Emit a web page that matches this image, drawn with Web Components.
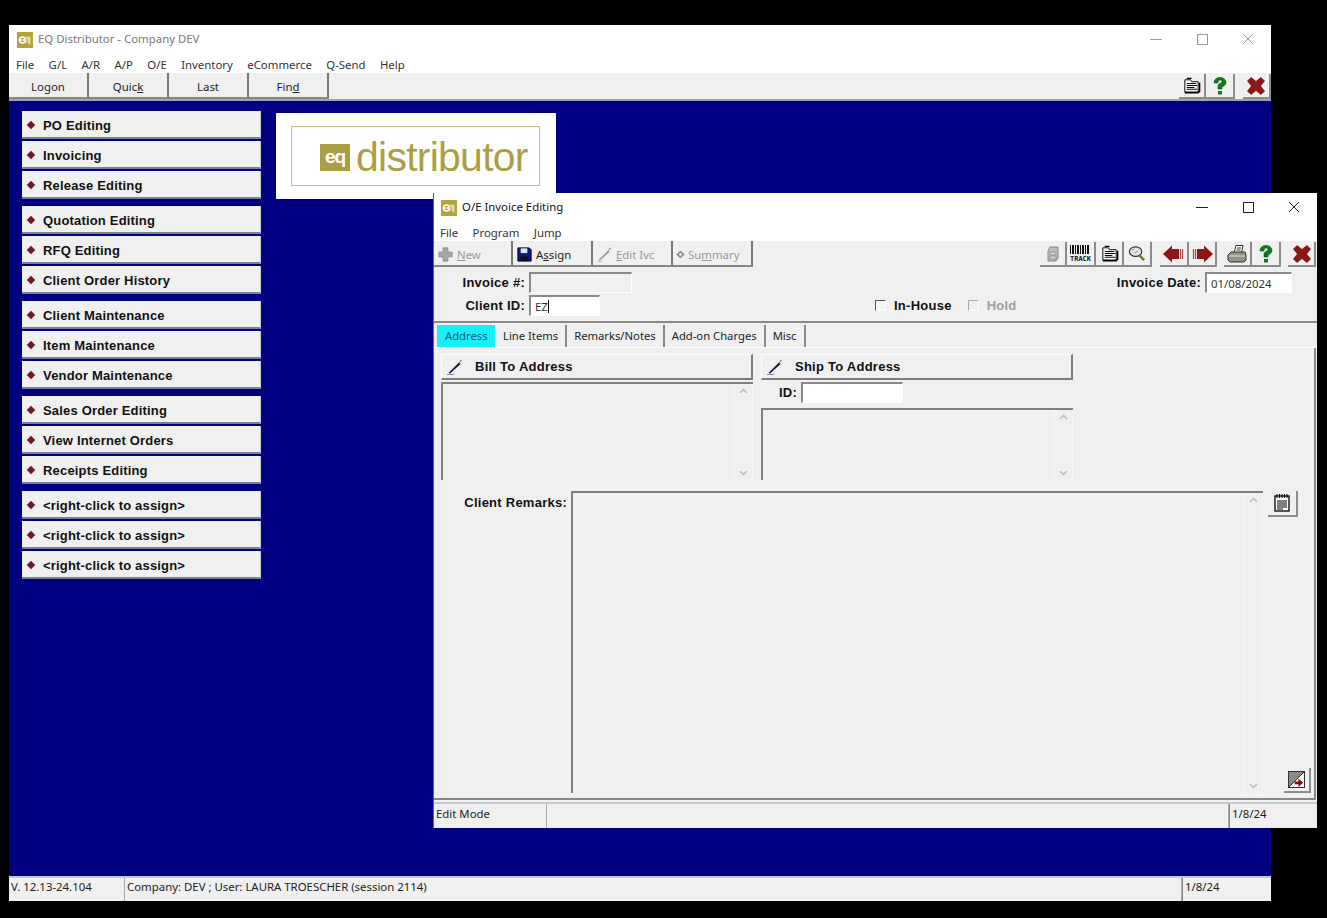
<!doctype html>
<html>
<head>
<meta charset="utf-8">
<style>
  html, body { margin: 0; height: 100%; background: #000; overflow: hidden; }
  body { font-family: "Noto Sans", sans-serif; font-size: 11.4px; color: #111; }
  .main { left: 9px; top: 25px; width: 1262px; height: 876px; }
  .child { left: 433px; top: 193px; width: 884px; height: 635px; border-left: 1px solid #666; }
</style>
</head>
<body>
<script>
const ICONS = {
  eq: `<svg viewBox="0 0 16 16"><rect width="16" height="16" fill="#b3a53c"/><circle cx="5.500" cy="8" r="3" fill="none" stroke="#fff" stroke-width="1.600"/><path d="M3 8h5" stroke="#fff" stroke-width="1.200"/><path d="M9 5.500h3.500v7" fill="none" stroke="#e8e2b0" stroke-width="1.500"/><rect x="9" y="6" width="2.500" height="4" fill="none" stroke="#e8e2b0"/></svg>`,
  list: `<svg viewBox="0 0 20 20"><path d="M3 4h6l1 2h7v11H3z" fill="#fff" stroke="#000"/><path d="M5 2.500h5M5 8h10M5 10h11M5 12h8M5 14h11" stroke="#000" stroke-width="1.100"/><path d="M3 17.500h14l1.500-1.500V7" stroke="#000" stroke-width="1.600" fill="none"/></svg>`,
  help: `<svg viewBox="0 0 20 20"><path d="M4 7c0-4 3-5.500 6-5.500s6 1.700 6 5c0 3-3 3.500-4 5v1.500H8v-3c0-2.500 4-3 4-4.500 0-1-1-1.500-2-1.500S8 5 8 7z" fill="#0c7a1e" stroke="#0a5a16" stroke-width=".6"/><rect x="8" y="15" width="4" height="3.500" fill="#0c7a1e"/></svg>`,
  close: `<svg viewBox="0 0 20 20"><path d="M1.500 5L5 1.500l5 4 5-4L18.500 5l-4 5 4 5-3.500 3.500-5-4-5 4L1.500 15l4-5z" fill="#8e1616" stroke="#5c0c0c" stroke-width=".7"/></svg>`,
  plus: `<svg viewBox="0 0 18 18"><path d="M6.500 2h5v4.500H16v5h-4.500V16h-5v-4.500H2v-5h4.500z" fill="#a8a8a8" stroke="#8a8a8a"/></svg>`,
  save: `<svg viewBox="0 0 18 18"><path d="M2 2h12l2 2v12H2z" fill="#0a1a8a" stroke="#000"/><rect x="5" y="2.500" width="7" height="5" fill="#dfe3f2"/><rect x="5" y="11" width="8" height="5" fill="#111"/></svg>`,
  pen: `<svg viewBox="0 0 18 18"><path d="M2.500 15L13 4.500l1.500 1.500L4 15.500z" fill="currentColor"/><path d="M13.500 4.500L15.500 2" stroke="#a33" stroke-width="1"/><path d="M1 16.500h7" stroke="currentColor" stroke-width=".8" opacity=".6"/></svg>`,
  diamond: `<svg viewBox="0 0 10 10"><path d="M5 1l4 4-4 4-4-4z" fill="#8a8a8a" stroke="#666" stroke-width=".6"/><path d="M5 3l2 2-2 2-2-2z" fill="#eee"/></svg>`,
  stack: `<svg viewBox="0 0 20 20"><path d="M5 7l2-4h8v11l-2 3H5z" fill="#bdbdbd" stroke="#858585"/><path d="M7 8h6v3H7zM7 12h6v3H7z" fill="#d2d2d2" stroke="#858585" stroke-width=".7"/></svg>`,
  magnify: `<svg viewBox="0 0 22 20"><ellipse cx="9" cy="8" rx="6.500" ry="5" fill="#e6e6e6" stroke="#333" stroke-width="1.200"/><path d="M5 7l3-2M7 10l5-3" stroke="#999"/><path d="M13 12l5 5" stroke="#7c7418" stroke-width="2.500"/></svg>`,
  left: `<svg viewBox="0 0 26 20"><path d="M2 10l9-8.500v17z" fill="#8e1616"/><rect x="11" y="5" width="7" height="10" fill="#8e1616"/><path d="M19.500 5v10M21.500 5v10" stroke="#8e1616" stroke-width="1.200" opacity=".75"/></svg>`,
  right: `<svg viewBox="0 0 26 20"><path d="M24 10l-9-8.500v17z" fill="#8e1616"/><rect x="8" y="5" width="7" height="10" fill="#8e1616"/><path d="M6.500 5v10M4.500 5v10" stroke="#8e1616" stroke-width="1.200" opacity=".75"/></svg>`,
  printer: `<svg viewBox="0 0 22 20"><path d="M8 9l2-7.500h7L15.500 9z" fill="#fff" stroke="#333"/><path d="M11 4h4M10.500 6h4" stroke="#333"/><path d="M2 11l3-3h14l1 3v5l-2 2H4l-2-2z" fill="#8f9684" stroke="#333"/><path d="M3 12h16" stroke="#ddd"/></svg>`,
  note: `<svg viewBox="0 0 20 20"><rect x="3" y="3" width="14" height="15" fill="#fff" stroke="#000" stroke-width="1.300"/><path d="M5 1v4M7.500 1v4M10 1v4M12.500 1v4M15 1v4" stroke="#000"/><path d="M5 8h10M5 10h10M5 12h10M5 14h10M5 16h6" stroke="#000"/></svg>`,
  corner: `<svg viewBox="0 0 18 18"><rect x=".5" y=".5" width="17" height="17" fill="#fff" stroke="#222"/><path d="M1 1h16L1 17z" fill="#8a8a8a"/><path d="M17 1L1 17" stroke="#222"/><path d="M7 11h4V8l5 4.500-5 4.500v-3H7z" fill="#7a1010"/></svg>`,
};

// every element gets the same shadow setup
function define(tag, css, render) {
  class El extends HTMLElement {
    constructor() {
      super();
      this.attachShadow({ mode: "open" });
    }
    connectedCallback() {
      this.shadowRoot.innerHTML = `<style>${css}</style>${render(this)}`;
    }
  }
  customElements.define(tag, El);
}

const boldFont = `font: bold 13px "Liberation Sans", sans-serif; letter-spacing: .25px; color: #111;`;

define("eq-window", `
  :host { position: absolute; display: flex; flex-direction: column; background: #f0f0f0; box-sizing: border-box; }
  .title { flex: none; display: flex; align-items: center; background: #fff; height: 29px; padding-left: var(--title-pad, 8px); gap: 5px; color: var(--title-color, #111); }
  .title .logo { width: 16px; height: 16px; display: block; }
  .title .logo svg { display: block; }
  .title .name { flex: 1; padding-bottom: 2px; }
  .caps { display: flex; align-items: center; color: var(--cap-color, #222); margin-top: -2px; }
  .caps svg { display: block; width: 46px; height: 14px; }
  .menu { flex: none; display: flex; gap: 14.4px; background: #fff; height: 19px; box-sizing: border-box; padding: 1px 0 0 var(--menu-pad, 7px); align-items: center; color: #333; }
  .bar { flex: none; display: flex; height: 26px; border-bottom: var(--bar-line, 0) solid #9aa4bd; }
  .body { flex: 1; min-height: 0; display: flex; flex-direction: column; }
`, (el) => `
  <div class="title"><span class="logo">${ICONS.eq}</span><span class="name">${el.getAttribute("caption")}</span>
    <span class="caps">
      <svg viewBox="0 0 46 14"><path d="M17 7.500h12" stroke="currentColor" fill="none"/></svg>
      <svg viewBox="0 0 46 14"><rect x="18.500" y="2.500" width="10" height="10" stroke="currentColor" fill="none"/></svg>
      <svg viewBox="0 0 46 14"><path d="M18 2l10 10M28 2L18 12" stroke="currentColor" fill="none"/></svg>
    </span>
  </div>
  <div class="menu">${el.getAttribute("menu").split(",").map((m) => `<span>${m}</span>`).join("")}</div>
  <div class="bar"><slot name="bar"></slot></div>
  <div class="body"><slot></slot></div>
`);

define("eq-toolbar", `
  :host { display: flex; width: 100%; align-items: flex-start; background: #f0f0f0; box-sizing: border-box; padding: var(--tb-pad, 0); }
`, () => `<slot></slot>`);

define("eq-tool", `
  :host { display: flex; align-items: center; justify-content: center; gap: 3px; width: var(--w, 80px); height: var(--th, 26px); box-sizing: border-box; padding-top: 3px; background: #f0f0f0; border-style: solid; border-width: 0 2px 2px 0; border-color: #888; border-right-color: #777; color: #222; }
  :host([off]) { color: #9a9a9a; }
  :host([lead]) { justify-content: flex-start; padding-left: 3px; }
  .i { width: var(--is, 17px); height: var(--is, 17px); display: block; flex: none; }
  .i svg { display: block; }
  u { text-underline-offset: 1px; }
`, (el) => `${el.hasAttribute("icon") ? `<span class="i">${ICONS[el.getAttribute("icon")]}</span>` : ""}<span>${el.innerHTML}</span>`);

define("eq-ibtn", `
  :host { display: flex; align-items: center; justify-content: center; flex: none; width: var(--w, 28px); height: var(--h, 25px); box-sizing: border-box; border-style: solid; border-width: 0 2px 2px 0; border-color: #8c8c8c; background: #f0f0f0; margin-left: var(--ml, 0); margin-top: var(--mt, 0); }
  svg { display: block; width: var(--s, 20px); height: var(--s, 20px); }
  span { font: bold 7px "DejaVu Sans Mono", monospace; line-height: 8px; color: #111; text-align: center; display: block; }
  .bars { display: block; width: 20px; height: 9px; background: repeating-linear-gradient(90deg, #111 0 1px, #f0f0f0 1px 2px, #111 2px 4px, #f0f0f0 4px 5px); margin-bottom: 1px; }
`, (el) => el.getAttribute("icon") === "track"
  ? `<span><i class="bars"></i>TRACK</span>`
  : ICONS[el.getAttribute("icon")]);

define("eq-side", `
  :host { display: flex; flex-direction: column; gap: 7px; flex: none; width: 239px; }
`, () => `<slot></slot>`);

define("eq-side-group", `
  :host { display: flex; flex-direction: column; gap: 2px; }
`, () => `<slot></slot>`);

define("eq-side-btn", `
  :host { display: flex; align-items: center; gap: 9px; height: 28px; padding: 2px 0 0 6px; background: #f0f0f0; box-sizing: border-box; border-bottom: 2px solid #7a7f9c; border-right: 1px solid #c8c8d0; ${boldFont} letter-spacing: .18px; }
  i { width: 6px; height: 6px; background: #7a1616; transform: rotate(45deg); flex: none; }
`, (el) => `<i></i><span>${el.innerHTML}</span>`);

define("eq-logo", `
  :host { display: block; flex: none; width: 280px; height: 86px; margin: 2px 0 0 15px; background: #fff; padding: 13px 15px; box-sizing: border-box; }
  .frame { height: 60px; width: 249px; box-sizing: border-box; border: 1px solid #c9c28a; display: flex; align-items: center; padding: 0 0 0 28px; gap: 6px; }
  .mark { width: 30px; height: 27px; background: #ab9f45; color: #fff; font: bold 19px "Liberation Sans", sans-serif; text-align: center; line-height: 26px; letter-spacing: -1px; margin-top: 3px; }
  .word { font: 41px "Liberation Sans", sans-serif; color: #ab9f45; letter-spacing: -.75px; line-height: 46px; margin-top: 1px; }
`, () => `<div class="frame"><span class="mark">eq</span><span class="word">distributor</span></div>`);

define("eq-status", `
  :host { display: flex; height: var(--sh, 25px); flex: none; box-sizing: border-box; border-top: 2px solid #c4c8d4; background: #f0f0f0; color: #222; }
  span { display: flex; align-items: center; padding: 0 0 6px 2px; box-sizing: border-box; border-right: 1px solid #aaa; white-space: pre; }
  span:first-child { padding-left: var(--sp, 2px); }
  span:last-child { border: 0; border-left: 1px solid #888; }
`, (el) => el.getAttribute("cells").split("|").map((c) => {
  const at = c.indexOf(":");
  const w = c.slice(0, at);
  return `<span style="${w === "*" ? "flex:1" : `width:${w}px`}">${c.slice(at + 1)}</span>`;
}).join(""));

define("eq-field", `
  :host { display: inline-flex; align-items: center; gap: 4px; }
  label { ${boldFont} text-align: right; width: var(--lw, auto); padding-bottom: 1px; }
  .box { height: 21px; width: var(--fw, 100px); box-sizing: border-box; border-style: solid; border-width: 2px 1px 1px 2px; border-color: #8a8a8a #fff #fff #8a8a8a; background: var(--fb, #fff); padding-left: 4px; display: flex; align-items: center; color: #333; }
  .caret { width: 1px; height: 13px; background: #000; }
`, (el) => `<label>${el.getAttribute("label")}</label><div class="box"><span>${el.getAttribute("value") || ""}</span>${el.hasAttribute("caret") ? '<i class="caret"></i>' : ""}</div>`);

define("eq-label", `
  :host { display: block; ${boldFont} text-align: right; padding-top: 4px; }
`, () => `<slot></slot>`);

define("eq-check", `
  :host { display: inline-flex; align-items: center; gap: 8px; ${boldFont} }
  :host([off]) { color: #a0a0a0; }
  i { width: 11px; height: 11px; box-sizing: border-box; border: 1px solid #fff; border-top-color: #555; border-left-color: #555; background: #f6f6f6; }
  :host([off]) i { border-top-color: #aaa; border-left-color: #aaa; background: #f0f0f0; }
`, (el) => `<i></i><span>${el.getAttribute("label")}</span>`);

define("eq-tabs", `
  :host { display: flex; height: 25px; flex: none; padding-left: 3px; color: #222; border-bottom: 1px solid #fff; box-sizing: border-box; font-size: 11.25px; }
  span { display: flex; align-items: center; padding: 0 7px 2px; border-right: 2px solid #8a8a8a; height: 22px; box-sizing: border-box; margin-top: 2px; }
  span.on { background: #18f0f8; color: #1a5a7a; width: 59px; padding: 0 0 2px 8px; border-right: 1px solid #fff; }
`, (el) => el.getAttribute("items").split(",").map((t, i) => `<span class="${i === 0 ? "on" : ""}">${t}</span>`).join(""));

define("eq-addr-head", `
  :host { display: flex; align-items: center; height: 26px; flex: none; box-sizing: border-box; border-style: solid; border-width: 1px 2px 2px 1px; border-color: #fff #7d7d7d #7d7d7d #fff; background: #f0f0f0; ${boldFont} padding-left: 4px; gap: 11px; }
  svg { width: 18px; height: 18px; color: #0c1440; display: block; }
`, (el) => `${ICONS.pen}<span>${el.getAttribute("label")}</span>`);

define("eq-memo", `
  :host { display: flex; justify-content: flex-end; box-sizing: border-box; border-style: solid; border-width: 2px 0 0 2px; border-color: #808080; background: #f0f0f0; height: var(--h, 98px); flex: none; }
  .sb { width: 17px; display: flex; flex-direction: column; justify-content: space-between; padding: 4px 0; border-left: 1px solid #f8f8f8; border-right: 1px solid #f8f8f8; align-items: center; }
  svg { width: 9px; height: 6px; display: block; }
`, () => `<div class="sb">
  <svg viewBox="0 0 9 6"><path d="M1 5l3.500-3.500L8 5" fill="none" stroke="#bdbdbd" stroke-width="1.600"/></svg>
  <svg viewBox="0 0 9 6"><path d="M1 1l3.500 3.500L8 1" fill="none" stroke="#bdbdbd" stroke-width="1.600"/></svg>
</div>`);

// form parts that only arrange their slots
define("eq-invoice-head", `
  :host { display: grid; grid-template-columns: 1fr auto; align-content: start; flex: none; height: 56px; box-sizing: border-box; padding: 5px 25px 0 0; border-bottom: 2px solid #8a8a8a; row-gap: 2px; }
  .row2 { display: flex; align-items: center; grid-column: 1 / 3; }
`, () => `<slot name="a"></slot><slot name="b"></slot><div class="row2"><slot name="c"></slot></div>`);

define("eq-address", `
  :host { display: block; flex: 1; min-height: 0; box-sizing: border-box; margin: 0 1px 2px 0; padding: 6px 4px 5px 7px; border-right: 2px solid #888; border-bottom: 2px solid #888; }
  .cols { display: grid; grid-template-columns: 312px 312px; column-gap: 8px; height: 127px; }
  .c { display: flex; flex-direction: column; }
`, () => `<div class="cols"><div class="c"><slot name="bill"></slot></div><div class="c"><slot name="ship"></slot></div></div><slot></slot>`);

define("eq-remarks", `
  :host { display: grid; grid-template-columns: 126px 692px 1fr; column-gap: 4px; margin-top: 10px; height: 302px; }
  .tools { display: flex; flex-direction: column; justify-content: space-between; align-items: flex-start; }
`, () => `<slot name="label"></slot><slot name="memo"></slot><div class="tools"><slot name="tools"></slot></div>`);

const side = [
  ["PO Editing", "Invoicing", "Release Editing"],
  ["Quotation Editing", "RFQ Editing", "Client Order History"],
  ["Client Maintenance", "Item Maintenance", "Vendor Maintenance"],
  ["Sales Order Editing", "View Internet Orders", "Receipts Editing"],
  ["&lt;right-click to assign&gt;", "&lt;right-click to assign&gt;", "&lt;right-click to assign&gt;"],
];

document.body.insertAdjacentHTML("beforeend", `
<eq-window class="main" caption="EQ Distributor - Company DEV" menu="File,G/L,A/R,A/P,O/E,Inventory,eCommerce,Q-Send,Help"
  style="--title-color:#777;--cap-color:#999;--bar-line:2px">
  <eq-toolbar slot="bar" style="--mt:1px">
    <eq-tool>Logon</eq-tool><eq-tool>Quic<u>k</u></eq-tool><eq-tool>Last</eq-tool><eq-tool>Fin<u>d</u></eq-tool>
    <span style="flex:1"></span>
    <eq-ibtn icon="list" style="--w:27px;--s:19px"></eq-ibtn><eq-ibtn icon="help" style="--w:29px"></eq-ibtn><eq-ibtn icon="close" style="--ml:8px"></eq-ibtn>
  </eq-toolbar>
  <div style="flex:1;min-height:0;background:#000080;display:flex;padding:10px 0 0 13px;align-items:flex-start">
    <eq-side>
      ${side.map((g) => `<eq-side-group>${g.map((t) => `<eq-side-btn>${t}</eq-side-btn>`).join("")}</eq-side-group>`).join("")}
    </eq-side>
    <eq-logo></eq-logo>
  </div>
  <eq-status cells="116:V. 12.13-24.104|1057:Company: DEV ; User: LAURA TROESCHER (session 2114)|*:1/8/24"></eq-status>
</eq-window>

<eq-window class="child" caption="O/E Invoice Editing" menu="File,Program,Jump" style="--title-pad:7px;--menu-pad:6px">
  <eq-toolbar slot="bar" style="--tb-pad:0 1px 0 0;--mt:1px">
    <eq-tool lead off icon="plus" style="--w:79px"><u>N</u>ew</eq-tool>
    <eq-tool lead icon="save">A<u>s</u>sign</eq-tool>
    <eq-tool lead off icon="pen"><u>E</u>dit Ivc</eq-tool>
    <eq-tool lead off icon="diamond" style="--is:9px">Su<u>m</u>mary</eq-tool>
    <span style="flex:1"></span>
    <eq-ibtn icon="stack" style="--w:27px"></eq-ibtn><eq-ibtn icon="track" style="--w:29px"></eq-ibtn><eq-ibtn icon="list" style="--s:19px"></eq-ibtn><eq-ibtn icon="magnify" style="--s:21px"></eq-ibtn>
    <eq-ibtn icon="left" style="--ml:8px;--w:29px;--s:26px"></eq-ibtn><eq-ibtn icon="right" style="--s:26px"></eq-ibtn>
    <eq-ibtn icon="printer" style="--ml:7px;--s:22px"></eq-ibtn><eq-ibtn icon="help" style="--w:29px"></eq-ibtn>
    <eq-ibtn icon="close" style="--ml:7px;padding-left:2px"></eq-ibtn>
  </eq-toolbar>
  <eq-invoice-head>
    <eq-field slot="a" label="Invoice #:" style="--lw:91px;--fw:103px;--fb:#f0f0f0"></eq-field>
    <eq-field slot="b" label="Invoice Date:" value="01/08/2024" style="--fw:87px"></eq-field>
    <div slot="c" style="display:flex;align-items:center">
      <eq-field label="Client ID:" value="EZ" caret style="--lw:91px;--fw:71px"></eq-field>
      <eq-check label="In-House" style="margin-left:275px"></eq-check>
      <eq-check off label="Hold" style="margin-left:16px"></eq-check>
    </div>
  </eq-invoice-head>
  <eq-tabs items="Address,Line Items,Remarks/Notes,Add-on Charges,Misc"></eq-tabs>
  <eq-address>
    <eq-addr-head slot="bill" label="Bill To Address"></eq-addr-head>
    <eq-memo slot="bill" style="margin-top:2px"></eq-memo>
    <eq-addr-head slot="ship" label="Ship To Address"></eq-addr-head>
    <eq-field slot="ship" label="ID:" style="--lw:36px;--fw:102px;margin-top:2px"></eq-field>
    <eq-memo slot="ship" style="--h:72px;margin-top:5px"></eq-memo>
    <eq-remarks>
      <eq-label slot="label">Client Remarks:</eq-label>
      <eq-memo slot="memo" style="--h:302px"></eq-memo>
      <eq-ibtn slot="tools" icon="note" style="--w:30px;--h:26px;--ml:1px;--mt:0"></eq-ibtn>
      <eq-ibtn slot="tools" icon="corner" style="--w:27px;--h:25px;--ml:17px;--s:17px;--mt:0"></eq-ibtn>
    </eq-remarks>
  </eq-address>
  <eq-status style="--sh:26px;--sp:1px" cells="113:Edit Mode|682: |*:1/8/24"></eq-status>
</eq-window>
`);
</script>
</body>
</html>
